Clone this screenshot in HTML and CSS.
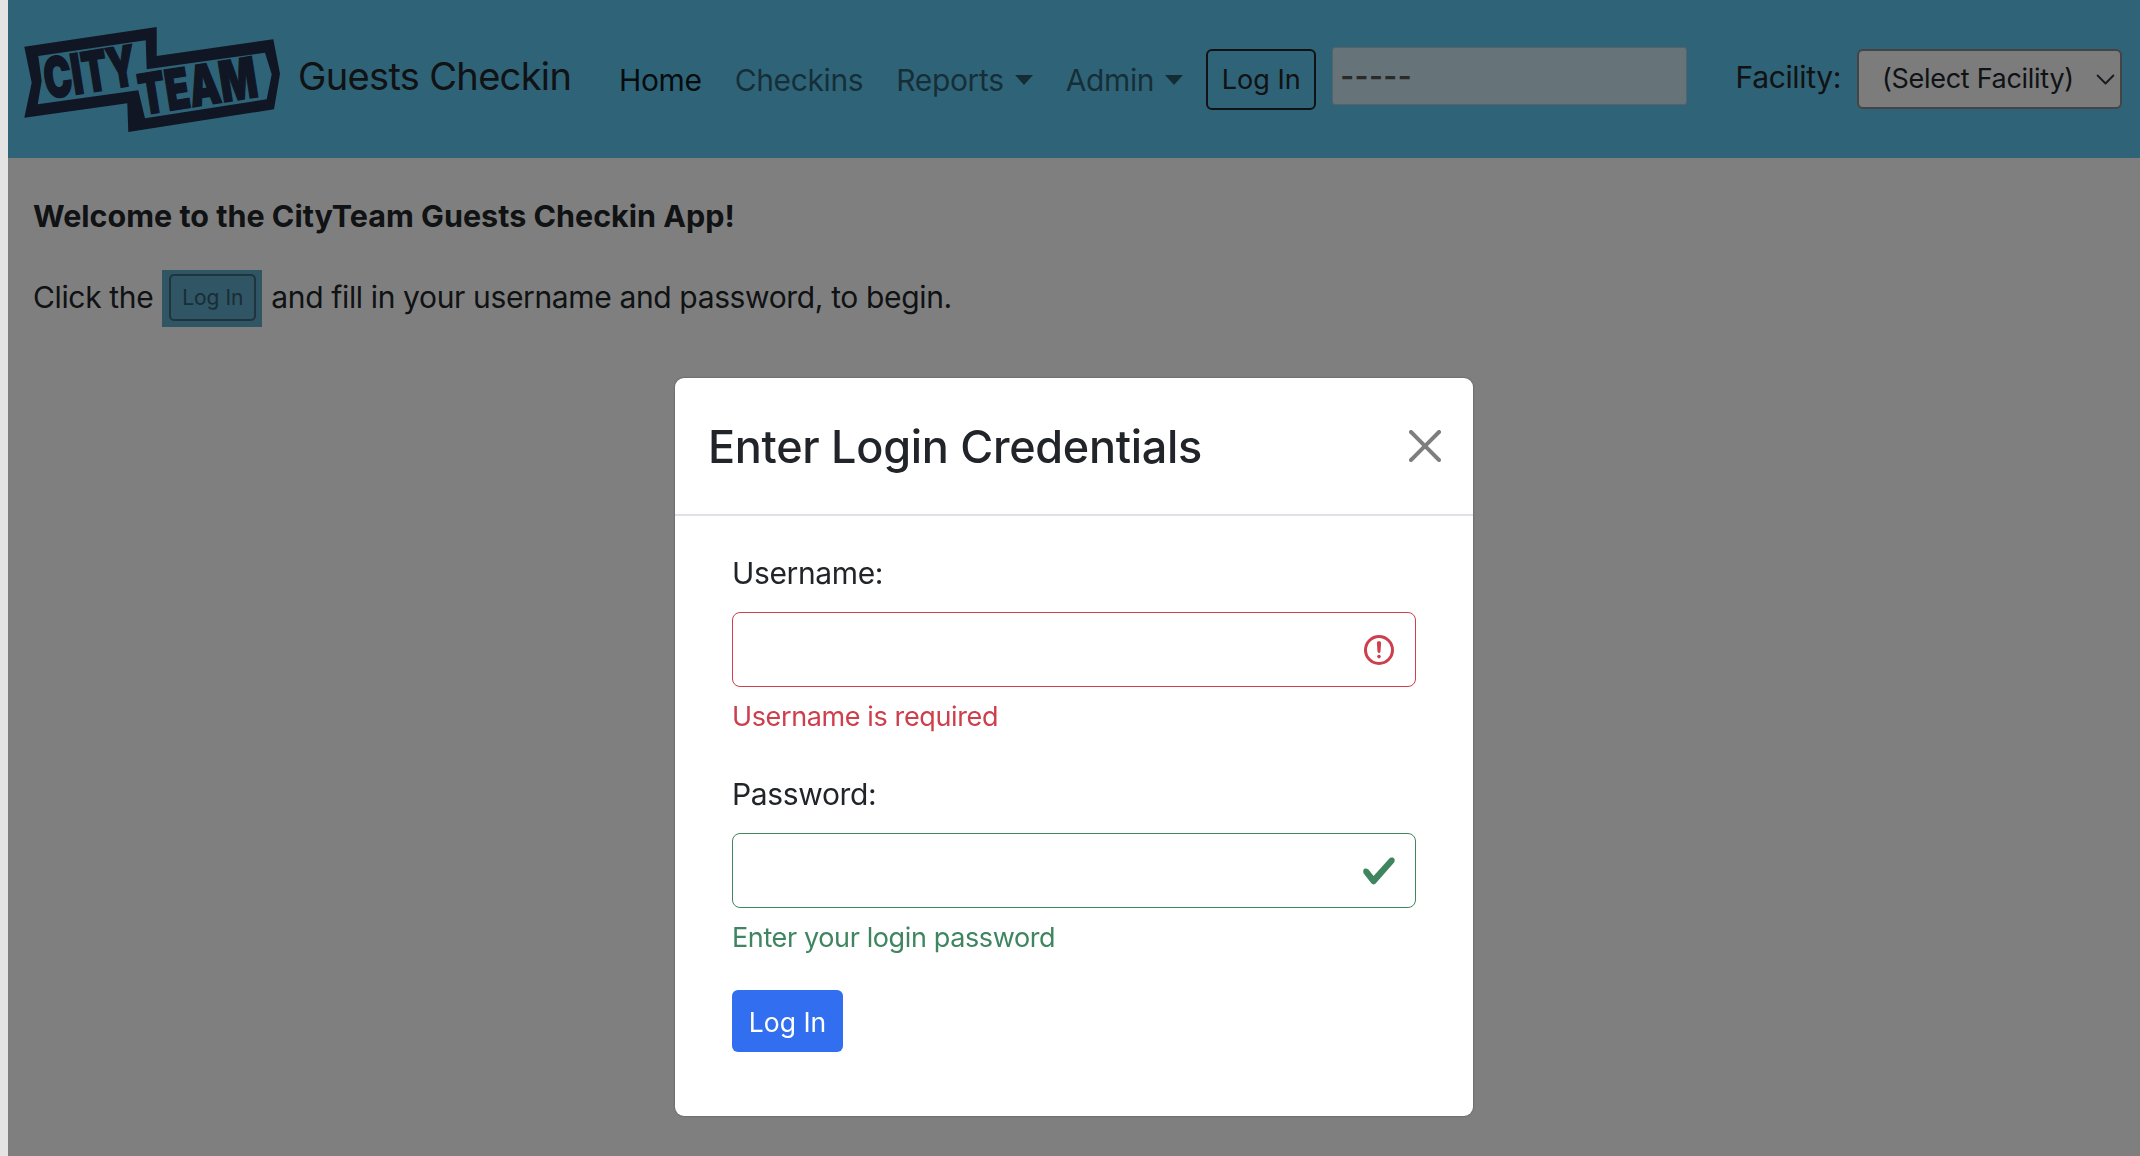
FILE: index.html
```html
<!DOCTYPE html>
<html lang="en">
<head>
<meta charset="UTF-8">
<meta name="viewport" content="width=device-width, initial-scale=1.0">
<title>CityTeam Guests Checkin</title>
<link rel="stylesheet" href="styles.css">
</head>
<body>
<div class="page">
    <nav class="navbar">
        <svg class="logo" width="256" height="105" viewBox="0 0 256 105">
            <path fill-rule="evenodd" fill="#202c46" d="M.3 19.7 132.7 0v29L249.3 12.3 256 46.7l-6 35.6L104.3 105l-1-28.7L.3 90.7l7.4-35zM14.3 29l107.4-15.7 1 29L241 25.7l6.7 21.6-5 25-121.7 19-6.7-28L13.7 77.3l4-23.3z"/>
            <text class="logo-text" x="23" y="72" textLength="93" lengthAdjust="spacingAndGlyphs" transform="rotate(-9 23 72)">CITY</text>
            <text class="logo-text" x="118" y="88" textLength="119" lengthAdjust="spacingAndGlyphs" transform="rotate(-9 118 88)">TEAM</text>
        </svg>
        <span class="brand">Guests Checkin</span>
        <ul class="nav-links">
            <li class="active">Home</li>
            <li>Checkins</li>
            <li class="dropdown">Reports</li>
            <li class="dropdown">Admin</li>
        </ul>
        <button class="btn-outline" type="button">Log In</button>
        <input class="user-box" type="text" value="-----" disabled>
        <label class="facility-label" for="facility">Facility:</label>
        <select class="facility-select" id="facility">
            <option>(Select Facility)</option>
        </select>
    </nav>
    <main class="content">
        <p class="welcome">Welcome to the CityTeam Guests Checkin App!</p>
        <p class="intro">Click the <span class="mark"><span class="mark-btn">Log In</span></span> and fill in your username and password, to begin.</p>
    </main>
    <div class="backdrop"></div>
</div>

<div class="modal-wrap">
    <div class="modal">
        <div class="modal-header">
            <h2>Enter Login Credentials</h2>
            <svg class="close" width="32" height="32" viewBox="0 0 16 16">
                <path d="M.293.293a1 1 0 011.414 0L8 6.586 14.293.293a1 1 0 111.414 1.414L9.414 8l6.293 6.293a1 1 0 01-1.414 1.414L8 9.414l-6.293 6.293a1 1 0 01-1.414-1.414L6.586 8 .293 1.707a1 1 0 010-1.414z"/>
            </svg>
        </div>
        <form class="modal-body">
            <div class="field">
                <label for="username">Username:</label>
                <div class="input-wrap">
                    <input class="invalid" id="username" type="text">
                    <svg class="state-icon" width="36" height="36" viewBox="0 0 12 12" fill="none" stroke="#cd3f4c">
                        <circle cx="6" cy="6" r="4.5"/>
                        <path stroke-linejoin="round" d="M5.8 3.6h.4L6 6.5z"/>
                        <circle cx="6" cy="8.2" r=".6" fill="#cd3f4c" stroke="none"/>
                    </svg>
                </div>
                <div class="msg msg-invalid">Username is required</div>
            </div>
            <div class="field">
                <label for="password">Password:</label>
                <div class="input-wrap">
                    <input class="valid" id="password" type="password">
                    <svg class="state-icon" width="36" height="36" viewBox="0 0 8 8">
                        <path fill="#3f8560" d="M2.3 6.73L.6 4.53c-.4-1.04.46-1.4 1.1-.8l1.1 1.4 3.4-3.8c.6-.63 1.6-.27 1.2.7l-4 4.6c-.43.5-.8.4-1.1.1z"/>
                    </svg>
                </div>
                <div class="msg msg-valid">Enter your login password</div>
            </div>
            <button class="btn-primary" type="button">Log In</button>
        </form>
    </div>
</div>
</body>
</html>
```

FILE: styles.css
```css
* {
    box-sizing: border-box;
}

html, body {
    height: 100%;
}

body {
    margin: 0;
    padding-left: 8px;
    overflow: hidden;
    background-color: #e4e4e4;
    font-family: Inter, "Liberation Sans", sans-serif;
    font-size: 30px;
    line-height: 44px;
    letter-spacing: -0.36px;
    color: #212529;
}

.page {
    position: relative;
    height: 100%;
    background-color: #fff;
}

.backdrop {
    position: absolute;
    top: 0;
    right: 0;
    bottom: 0;
    left: 0;
    background-color: rgba(0, 0, 0, 0.5);
}

.navbar {
    display: flex;
    align-items: center;
    height: 158px;
    padding: 0 18px 0 16px;
    white-space: nowrap;
    background-color: #5ec6ee;
}

.logo {
    flex: none;
    overflow: visible;
}

.logo-text {
    font-family: Inter, sans-serif;
    font-size: 56px;
    font-weight: 900;
    letter-spacing: 0;
    fill: #202c46;
    stroke: #202c46;
    stroke-width: 1.6px;
}

.brand {
    flex: none;
    width: 321px;
    margin: -6px 0 0 18px;
    font-size: 38px;
    letter-spacing: -0.66px;
}

.nav-links {
    display: flex;
    flex: none;
    gap: 33px;
    margin: 2px 0 0;
    padding: 0;
    list-style: none;
    color: rgba(0, 0, 0, 0.55);
}

.nav-links .active {
    color: rgba(0, 0, 0, 0.9);
}

.dropdown::after {
    content: "";
    display: inline-block;
    margin-left: 11px;
    vertical-align: 6px;
    border-top: 10px solid;
    border-left: 9px solid transparent;
    border-right: 9px solid transparent;
}

.btn-outline {
    flex: none;
    width: 110px;
    height: 61px;
    margin-left: 23px;
    padding: 2px 0 0;
    border: 2px solid #212529;
    border-radius: 6px;
    background: transparent;
    font: inherit;
    font-size: 27px;
    color: #212529;
}

.user-box {
    flex: none;
    width: 355px;
    height: 58px;
    margin: -6px 0 0 16px;
    padding: 0 7px;
    border: 1px solid #a8c6d3;
    border-radius: 3px;
    background-color: #cce6f0;
    font: inherit;
    font-weight: 600;
    letter-spacing: 0.4px;
    color: #555;
}

.facility-label {
    margin: -4px 0 0 auto;
}

.facility-select {
    flex: none;
    width: 265px;
    height: 60px;
    margin-left: 16px;
    padding: 0 36px 0 23px;
    border: 2px solid #888;
    border-radius: 6px;
    appearance: none;
    background: #f8f9fa url("data:image/svg+xml,%3csvg xmlns='http://www.w3.org/2000/svg' viewBox='0 0 16 16'%3e%3cpath fill='none' stroke='%23343a40' stroke-linecap='round' stroke-linejoin='round' stroke-width='1.5' d='m2 5 6 6 6-6'/%3e%3c/svg%3e") no-repeat right 4px center / 21px 21px;
    font: inherit;
    font-size: 27px;
    letter-spacing: -0.3px;
    color: #212529;
}

.content {
    padding: 0 25px;
}

.content p {
    margin: 0;
}

.welcome {
    padding-top: 36px;
    font-size: 30.5px;
    font-weight: 700;
    letter-spacing: 0;
}

.intro {
    display: flex;
    align-items: center;
    gap: 9px;
    margin-top: 28px !important;
}

.mark {
    display: flex;
    width: 100px;
    height: 57px;
    margin-top: 4px;
    padding: 4px 6px 6px 7px;
    background-color: #60aac8;
}

.mark-btn {
    flex: 1;
    border: 2px solid #40687c;
    border-radius: 5px;
    font-size: 21px;
    line-height: 44px;
    letter-spacing: 0;
    text-align: center;
    color: #325a6c;
}

.modal-wrap {
    position: fixed;
    top: 0;
    left: 8px;
    right: 0;
    display: flex;
    justify-content: center;
    padding-top: 378px;
}

.modal {
    width: 798px;
    height: 738px;
    border-radius: 9px;
    background-color: #fff;
    box-shadow: 0 0 2px rgba(0, 0, 0, 0.4);
}

.modal-header {
    display: flex;
    align-items: center;
    justify-content: space-between;
    height: 138px;
    padding: 0 32px 0 33px;
    border-bottom: 2px solid #dee2e6;
}

.modal-header h2 {
    margin: 2px 0 0;
    font-size: 45px;
    font-weight: 500;
    line-height: 60px;
    letter-spacing: -0.3px;
}

.close {
    opacity: 0.5;
}

.modal-body {
    padding: 35px 57px 0 57px;
}

.field label {
    display: block;
    margin-bottom: 17px;
}

.field + .field {
    margin-top: 35px;
}

.input-wrap {
    position: relative;
}

.input-wrap input {
    display: block;
    width: 100%;
    height: 75px;
    border-radius: 8px;
    border: 1.5px solid;
    outline: none;
    background-color: #fff;
}

.invalid {
    border-color: #cd3f4c !important;
}

.valid {
    border-color: #3f8560 !important;
}

.state-icon {
    position: absolute;
    top: 20px;
    right: 19px;
}

.msg {
    margin-top: 10px;
    font-size: 27px;
    line-height: 40px;
    letter-spacing: -0.38px;
}

.msg-invalid {
    color: #cd3f4c;
}

.msg-valid {
    color: #3f8560;
}

.btn-primary {
    display: block;
    width: 111px;
    height: 62px;
    margin-top: 32px;
    padding: 1px 0 0;
    border: none;
    border-radius: 6px;
    background-color: #316ff0;
    font: inherit;
    font-size: 26.5px;
    color: #fff;
}
```
